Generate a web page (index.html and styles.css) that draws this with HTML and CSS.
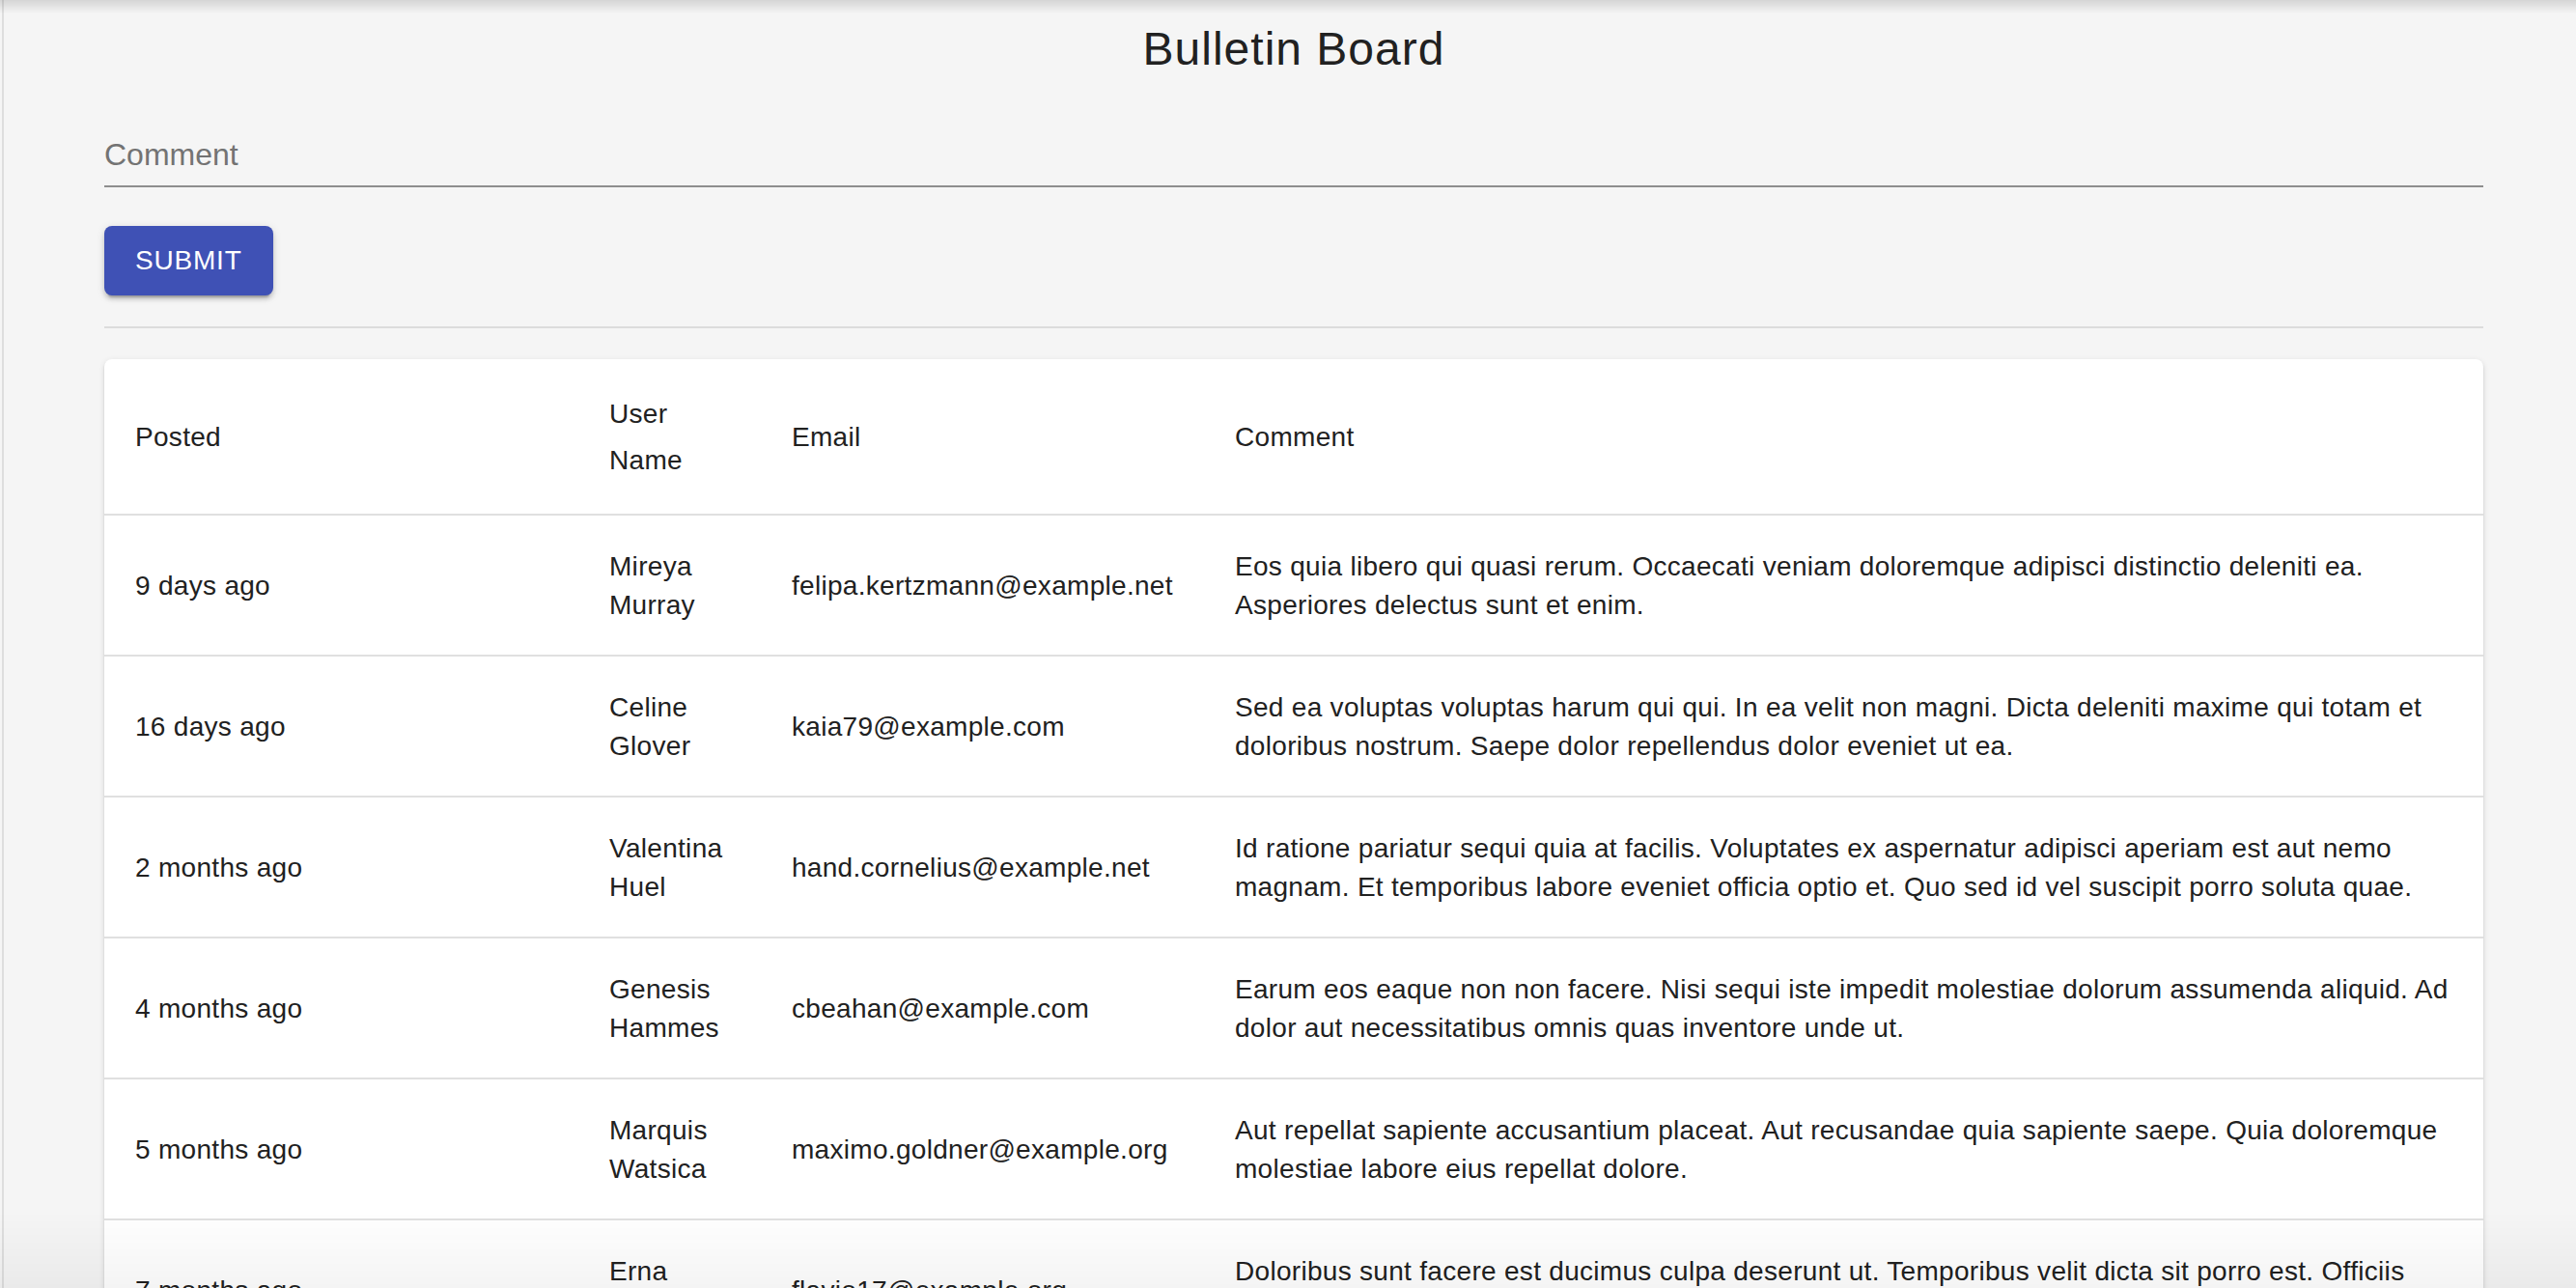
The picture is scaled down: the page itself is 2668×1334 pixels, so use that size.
FILE: index.html
```html
<!DOCTYPE html>
<html lang="en">
<head>
<meta charset="utf-8">
<title>Bulletin Board</title>
<link rel="stylesheet" href="styles.css">
</head>
<body>
<div class="frame">
  <main class="page">
    <h1 class="title">Bulletin Board</h1>
    <form class="form">
      <div class="field">
        <input class="field-input" type="text" placeholder="Comment" aria-label="Comment">
      </div>
      <button class="btn" type="button">SUBMIT</button>
    </form>
    <hr class="divider">
    <div class="paper">
      <table class="grid">
        <colgroup>
          <col class="c-posted">
          <col class="c-user">
          <col class="c-email">
          <col class="c-comment">
        </colgroup>
        <thead>
          <tr>
            <th>Posted</th>
            <th>User Name</th>
            <th>Email</th>
            <th class="last">Comment</th>
          </tr>
        </thead>
        <tbody>
          <tr>
            <td>9 days ago</td>
            <td>Mireya Murray</td>
            <td>felipa.kertzmann@example.net</td>
            <td class="last">Eos quia libero qui quasi rerum. Occaecati veniam doloremque adipisci distinctio deleniti ea. Asperiores delectus sunt et enim.</td>
          </tr>
          <tr>
            <td>16 days ago</td>
            <td>Celine Glover</td>
            <td>kaia79@example.com</td>
            <td class="last">Sed ea voluptas voluptas harum qui qui. In ea velit non magni. Dicta deleniti maxime qui totam et doloribus nostrum. Saepe dolor repellendus dolor eveniet ut ea.</td>
          </tr>
          <tr>
            <td>2 months ago</td>
            <td>Valentina Huel</td>
            <td>hand.cornelius@example.net</td>
            <td class="last">Id ratione pariatur sequi quia at facilis. Voluptates ex aspernatur adipisci aperiam est aut nemo magnam. Et temporibus labore eveniet officia optio et. Quo sed id vel suscipit porro soluta quae.</td>
          </tr>
          <tr>
            <td>4 months ago</td>
            <td>Genesis Hammes</td>
            <td>cbeahan@example.com</td>
            <td class="last">Earum eos eaque non non facere. Nisi sequi iste impedit molestiae dolorum assumenda aliquid. Ad dolor aut necessitatibus omnis quas inventore unde ut.</td>
          </tr>
          <tr>
            <td>5 months ago</td>
            <td>Marquis Watsica</td>
            <td>maximo.goldner@example.org</td>
            <td class="last">Aut repellat sapiente accusantium placeat. Aut recusandae quia sapiente saepe. Quia doloremque molestiae labore eius repellat dolore.</td>
          </tr>
          <tr>
            <td>7 months ago</td>
            <td>Erna Bogan</td>
            <td>flavio17@example.org</td>
            <td class="last">Doloribus sunt facere est ducimus culpa deserunt ut. Temporibus velit dicta sit porro est. Officiis voluptatem quia autem dolorem.</td>
          </tr>
        </tbody>
      </table>
    </div>
  </main>
</div>
<div class="shade-top" aria-hidden="true"></div>
<div class="shade-bottom" aria-hidden="true"></div>
</body>
</html>
```

FILE: styles.css
```css
html, body {
  margin: 0;
  padding: 0;
}

body {
  background: #f5f5f5;
  font-family: "Liberation Sans", Arial, Helvetica, sans-serif;
  color: #212121;
}

.frame {
  margin-left: 2px;
  border-left: 2px solid #dedede;
  min-height: 100vh;
}

.page {
  padding: 0 96px 0 104px;
}

.title {
  margin: 0;
  padding-top: 21px;
  font-size: 48px;
  line-height: 59px;
  font-weight: 400;
  letter-spacing: 1px;
  text-align: center;
  color: #212121;
}

.form {
  margin: 16px 0 0;
  display: flex;
  flex-direction: column;
  align-items: flex-start;
}

.field {
  align-self: stretch;
  padding: 45px 0 13px;
  border-bottom: 2px solid #8e8e8e;
}

.field-input {
  display: block;
  width: 100%;
  height: 38px;
  margin: 0;
  padding: 0;
  border: none;
  outline: none;
  background: transparent;
  font-family: inherit;
  font-size: 32px;
  line-height: 38px;
  color: #212121;
}

.field-input::placeholder {
  color: #737373;
  opacity: 1;
}

.btn {
  margin-top: 40px;
  height: 72px;
  padding: 0 32px;
  border: none;
  border-radius: 8px;
  background: #3f51b5;
  color: #ffffff;
  font-family: inherit;
  font-size: 28px;
  font-weight: 500;
  letter-spacing: 0.8px;
  line-height: 72px;
  cursor: pointer;
  box-shadow: 0 6px 2px -4px rgba(0, 0, 0, 0.2),
              0 4px 4px 0 rgba(0, 0, 0, 0.14),
              0 2px 10px 0 rgba(0, 0, 0, 0.12);
}

.divider {
  margin: 32px 0 0;
  height: 2px;
  border: none;
  background: #dcdcdc;
}

.paper {
  margin-top: 32px;
  background: #ffffff;
  border-radius: 8px;
  overflow: hidden;
  box-shadow: 0 4px 2px -2px rgba(0, 0, 0, 0.2),
              0 2px 2px 0 rgba(0, 0, 0, 0.14),
              0 2px 6px 0 rgba(0, 0, 0, 0.12);
}

.grid {
  width: 100%;
  table-layout: fixed;
  border-collapse: collapse;
  border-spacing: 0;
}

.c-posted { width: 491px; }
.c-user { width: 189px; }
.c-email { width: 459px; }
.c-comment { width: auto; }

.grid th,
.grid td {
  padding: 33px 32px 31px;
  border-bottom: 2px solid #e0e0e0;
  font-size: 28px;
  letter-spacing: 0.3px;
  text-align: left;
  vertical-align: middle;
  color: #212121;
}

.grid th {
  font-weight: 400;
  line-height: 48px;
}

.grid td {
  line-height: 40px;
}

.grid .last {
  padding-right: 20px;
}

.shade-top {
  position: fixed;
  top: 0;
  left: 0;
  right: 0;
  height: 14px;
  background: linear-gradient(to bottom, rgba(0, 0, 0, 0.13), rgba(0, 0, 0, 0));
  pointer-events: none;
}

.shade-bottom {
  position: fixed;
  bottom: 0;
  left: 0;
  right: 0;
  height: 80px;
  background: linear-gradient(to bottom, rgba(0, 0, 0, 0), rgba(0, 0, 0, 0.045));
  pointer-events: none;
}
```
